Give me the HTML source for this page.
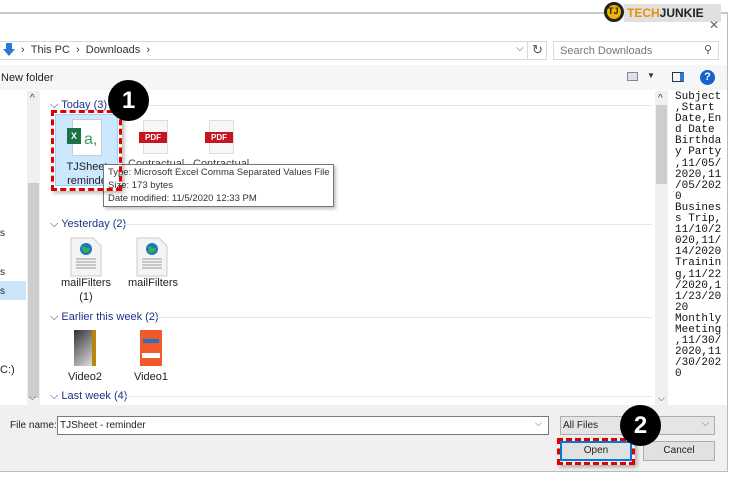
<!DOCTYPE html>
<html><head><meta charset="utf-8"><style>
*{margin:0;padding:0;box-sizing:border-box}
body{width:730px;height:478px;background:#fff;position:relative;overflow:hidden;font-family:"Liberation Sans",sans-serif;font-size:11px;color:#222}
.a{position:absolute}
.hdr{color:#1e3287;font-size:11px}
.line{height:1px;background:#e5e5e5}
.lbl{font-size:11px;text-align:center;color:#222;line-height:14px}
.pre{font-family:"Liberation Mono",monospace;font-size:11px;line-height:11.1px;color:#111;white-space:pre}
.pdf{background:#f7f7f7;border:1px solid #ddd}
.pdf b{position:absolute;left:-5px;top:11px;width:28px;height:11px;background:#c8141e;color:#fff;font-size:8px;text-align:center;line-height:11px;font-weight:bold}
</style></head><body>
<div class="a" style="left:0;top:12px;width:728px;height:460px;border:1px solid #bbb;border-left:none;background:#fff"></div>
<div class="a" style="left:0;top:12px;width:728px;height:2px;background:#c8c8c8"></div>
<div class="a" style="left:624px;top:4px;width:97px;height:18px;background:#e0e0e0"></div>
<div class="a" style="left:604px;top:2px;width:20px;height:20px;border-radius:50%;background:#f0b400;border:3px solid #222"></div>
<div class="a" style="left:608px;top:6px;color:#222;font-weight:bold;font-size:9px">TJ</div>
<div class="a" style="left:627px;top:6px;font-weight:bold;font-size:12px"><span style="color:#e89200">TECH</span><span style="color:#222">JUNKIE</span></div>
<div class="a" style="left:709px;top:18px;color:#666;font-size:12px">✕</div>
<div class="a" style="left:0;top:41px;width:547px;height:19px;border:1px solid #d9d9d9;border-left:none"></div>
<div class="a" style="left:527px;top:41px;width:1px;height:19px;background:#d9d9d9"></div>
<svg class="a" style="left:3px;top:43px" width="12" height="14"><path d="M3 0h6v6h3l-6 7-6-7h3z" fill="#2a7ad5"/></svg>
<div class="a" style="left:21px;top:44px;font-size:11px;color:#333">›&nbsp;&nbsp;This PC&nbsp;&nbsp;›&nbsp;&nbsp;Downloads&nbsp;&nbsp;›</div>
<div class="a" style="left:516px;top:43px;color:#555;font-size:10px">⌵</div>
<div class="a" style="left:532px;top:42px;color:#555;font-size:13px">↻</div>
<div class="a" style="left:553px;top:41px;width:166px;height:19px;border:1px solid #d9d9d9"></div>
<div class="a" style="left:560px;top:45px;color:#777">Search Downloads</div>
<div class="a" style="left:704px;top:43px;color:#555;font-size:11px">⚲</div>
<div class="a" style="left:0;top:65px;width:727px;height:25px;background:#f5f6f7"></div>
<div class="a" style="left:1px;top:72px;color:#222">New folder</div>
<div class="a" style="left:627px;top:72px;width:11px;height:9px;border:1px solid #888;background:#dde"></div>
<div class="a" style="left:647px;top:71px;font-size:8px;color:#333">▼</div>
<div class="a" style="left:672px;top:72px;width:12px;height:10px;border:1px solid #333;border-right:4px solid #2a7ad5"></div>
<div class="a" style="left:700px;top:70px;width:15px;height:15px;border-radius:50%;background:#1560c9;color:#fff;font-weight:bold;font-size:11px;text-align:center;line-height:15px">?</div>
<div class="a" style="left:0;top:281px;width:26px;height:19px;background:#cce4f7"></div>
<div class="a" style="left:0;top:228px;font-size:10px">s</div>
<div class="a" style="left:0;top:267px;font-size:10px">s</div>
<div class="a" style="left:0;top:286px;font-size:10px">s</div>
<div class="a" style="left:0;top:364px;font-size:11px">C:)</div>
<div class="a" style="left:27px;top:91px;width:13px;height:314px;background:#f0f0f0"></div>
<div class="a" style="left:28px;top:183px;width:11px;height:215px;background:#cdcdcd"></div>
<div class="a" style="left:30px;top:93px;font-size:10px;color:#333">^</div>
<div class="a" style="left:29px;top:392px;font-size:9px;color:#333">⌵</div>
<div class="a hdr" style="left:50px;top:99px">⌵ Today (3)</div><div class="a line" style="left:108px;top:105px;width:544px"></div>
<div class="a hdr" style="left:50px;top:218px">⌵ Yesterday (2)</div><div class="a line" style="left:122px;top:224px;width:530px"></div>
<div class="a hdr" style="left:50px;top:311px">⌵ Earlier this week (2)</div><div class="a line" style="left:152px;top:317px;width:500px"></div>
<div class="a hdr" style="left:50px;top:390px">⌵ Last week (4)</div><div class="a line" style="left:124px;top:396px;width:528px"></div>
<div class="a" style="left:55px;top:114px;width:63px;height:72px;background:#cce8ff;border:1px solid #99d1ff"></div>
<div class="a" style="left:72px;top:119px;width:30px;height:37px;background:#fff;border:1px solid #ccc"></div>
<div class="a" style="left:67px;top:128px;width:14px;height:16px;background:#1e7145;color:#fff;font-size:9px;font-weight:bold;text-align:center;line-height:16px">X</div>
<div class="a" style="left:84px;top:131px;color:#3a9a5c;font-size:16px">a,</div>
<div class="a lbl" style="left:57px;top:160px;width:60px">TJSheet<br>reminde</div>
<div class="a pdf" style="left:143px;top:120px;width:25px;height:34px"><b>PDF</b></div>
<div class="a pdf" style="left:209px;top:120px;width:25px;height:34px"><b>PDF</b></div>
<div class="a lbl" style="left:128px;top:157px;width:55px;color:#444">Contractual</div>
<div class="a lbl" style="left:193px;top:157px;width:55px;color:#444">Contractual</div>
<div class="a" style="left:103px;top:164px;width:231px;height:43px;background:#fff;border:1px solid #767676;box-shadow:2px 2px 3px rgba(0,0,0,.25);padding:1px 4px;font-size:9.5px;line-height:13px;color:#333;white-space:nowrap">Type: Microsoft Excel Comma Separated Values File<br>Size: 173 bytes<br>Date modified: 11/5/2020 12:33 PM</div>
<div class="a" style="left:51px;top:110px;width:71px;height:81px;border:3px dashed #e00000;box-shadow:2px 2px 4px rgba(0,0,0,.3)"></div>
<div class="a" style="left:108px;top:80px;width:41px;height:41px;border-radius:50%;background:#000;color:#fff;font-weight:bold;font-size:24px;text-align:center;line-height:41px">1</div>
<svg class="a" style="left:70px;top:237px" width="32" height="40"><path d="M1 1h22l8 8v30H1z" fill="#f4f4f4" stroke="#ccc"/><circle cx="16" cy="12" r="6" fill="#1a78c2"/><path d="M12 9c3 0 5 3 8 2 0 3-3 6-7 4z" fill="#3ab04a"/><path d="M6 22h20M6 25h20M6 28h20M6 31h20" stroke="#999"/></svg>
<svg class="a" style="left:136px;top:237px" width="32" height="40"><path d="M1 1h22l8 8v30H1z" fill="#f4f4f4" stroke="#ccc"/><circle cx="16" cy="12" r="6" fill="#1a78c2"/><path d="M12 9c3 0 5 3 8 2 0 3-3 6-7 4z" fill="#3ab04a"/><path d="M6 22h20M6 25h20M6 28h20M6 31h20" stroke="#999"/></svg>
<div class="a lbl" style="left:58px;top:276px;width:56px">mailFilters<br>(1)</div>
<div class="a lbl" style="left:125px;top:276px;width:56px">mailFilters</div>
<div class="a" style="left:74px;top:330px;width:22px;height:36px;background:linear-gradient(135deg,#333,#888 50%,#ddd);border-right:4px solid #b8860b"></div>
<div class="a" style="left:140px;top:330px;width:22px;height:36px;background:#f05a28"><div style="margin:9px 3px;height:4px;background:#2a70c0"></div><div style="margin:10px 2px;height:5px;background:#fff"></div></div>
<div class="a lbl" style="left:60px;top:370px;width:50px">Video2</div>
<div class="a lbl" style="left:126px;top:370px;width:50px">Video1</div>
<div class="a" style="left:655px;top:91px;width:13px;height:314px;background:#f0f0f0"></div>
<div class="a" style="left:656px;top:105px;width:11px;height:79px;background:#cdcdcd"></div>
<div class="a" style="left:658px;top:93px;font-size:10px;color:#333">^</div>
<div class="a" style="left:658px;top:393px;font-size:9px;color:#333">⌵</div>
<div class="a pre" style="left:675px;top:92px">Subject
,Start
Date,En
d Date
Birthda
y Party
,11/05/
2020,11
/05/202
0
Busines
s Trip,
11/10/2
020,11/
14/2020
Trainin
g,11/22
/2020,1
1/23/20
20
Monthly
Meeting
,11/30/
2020,11
/30/202
0</div>
<div class="a" style="left:0;top:405px;width:727px;height:66px;background:#f0f0f0"></div>
<div class="a" style="left:10px;top:420px;font-size:10px;color:#222">File name:</div>
<div class="a" style="left:57px;top:416px;width:492px;height:19px;background:#fff;border:1px solid #7a7a7a"></div>
<div class="a" style="left:60px;top:420px;font-size:10px">TJSheet - reminder</div>
<div class="a" style="left:535px;top:418px;font-size:9px;color:#555">⌵</div>
<div class="a" style="left:560px;top:416px;width:155px;height:19px;background:#e5e5e5;border:1px solid #adadad"></div>
<div class="a" style="left:563px;top:420px;font-size:10px">All Files</div>
<div class="a" style="left:702px;top:418px;font-size:9px;color:#555">⌵</div>
<div class="a" style="left:560px;top:441px;width:72px;height:20px;background:#e1e1e1;border:2px solid #0078d7;font-size:10px;text-align:center;line-height:16px">Open</div>
<div class="a" style="left:643px;top:441px;width:72px;height:20px;background:#e1e1e1;border:1px solid #adadad;font-size:10px;text-align:center;line-height:18px">Cancel</div>
<div class="a" style="left:557px;top:438px;width:78px;height:27px;border:3px dashed #e00000;box-shadow:2px 2px 4px rgba(0,0,0,.3)"></div>
<div class="a" style="left:620px;top:405px;width:41px;height:41px;border-radius:50%;background:#000;color:#fff;font-weight:bold;font-size:24px;text-align:center;line-height:41px">2</div>
</body></html>
